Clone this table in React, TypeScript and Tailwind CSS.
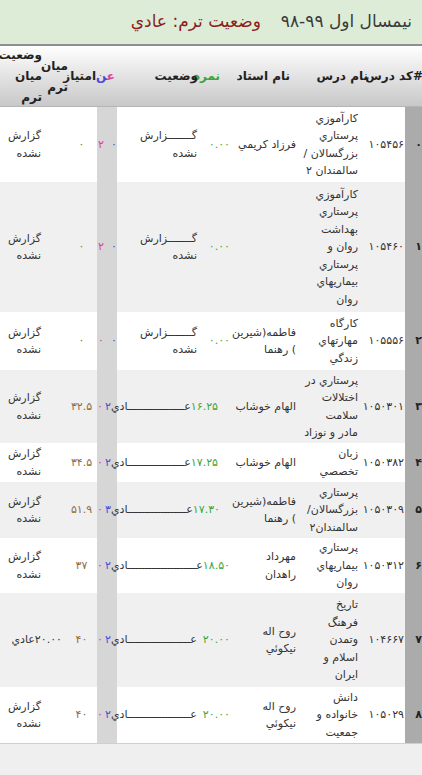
import clsx from 'clsx'

type Row = {
  n: string
  code: string
  name: string[]
  prof: string[]
  grade: string
  done: boolean
  gradePad?: string
  gap?: boolean
  ein: [string, string]
  score: string
  mid?: string
  h: string
  odd: boolean
}

const rows: Row[] = [
  { n: '۰', code: '۱۰۵۴۵۶', name: ['کارآموزي', 'پرستاري', 'بزرگسالان /', 'سالمندان ۲'], prof: ['فرزاد کریمي'], grade: '۰.۰۰', done: false, ein: ['۲', '۰'], score: '۰', h: 'h-[75px]', odd: false },
  { n: '۱', code: '۱۰۵۴۶۰', name: ['کارآموزي', 'پرستاري', 'بهداشت', 'روان و', 'پرستاري', 'بیماریهاي', 'روان'], prof: [], grade: '۰.۰۰', done: false, ein: ['۲', '۰'], score: '۰', h: 'h-[130px]', odd: true },
  { n: '۲', code: '۱۰۵۵۵۶', name: ['کارگاه', 'مهارتهاي', 'زندگي'], prof: ['فاطمه(شیرین', ') رهنما'], grade: '۰.۰۰', done: false, ein: ['۰', '۰'], score: '۰', h: 'h-[58px]', odd: false },
  { n: '۳', code: '۱۰۵۰۳۰۱', name: ['پرستاري در', 'اختلالات', 'سلامت', 'مادر و نوزاد'], prof: ['الهام خوشاب'], grade: '۱۶.۲۵', done: true, gradePad: 'pr-[14px]', ein: ['۰', '۲'], score: '۳۲.۵', h: 'h-[73px]', odd: true },
  { n: '۴', code: '۱۰۵۰۳۸۲', name: ['زبان', 'تخصصي'], prof: ['الهام خوشاب'], grade: '۱۷.۲۵', done: true, gradePad: 'pr-[14px]', ein: ['۰', '۲'], score: '۳۴.۵', h: 'h-[39px]', odd: false },
  { n: '۵', code: '۱۰۵۰۳۰۹', name: ['پرستاري', 'بزرگسالان/', 'سالمندان۲'], prof: ['فاطمه(شیرین', ') رهنما'], grade: '۱۷.۳۰', done: true, gradePad: 'pr-[12px]', ein: ['۰', '۳'], score: '۵۱.۹', h: 'h-[56px]', odd: true },
  { n: '۶', code: '۱۰۵۰۳۱۲', name: ['پرستاري', 'بیماریهاي', 'روان'], prof: ['مهرداد', 'راهدان'], grade: '۱۸.۵۰', done: true, gradePad: 'pr-[2px]', ein: ['۰', '۲'], score: '۳۷', h: 'h-[55px]', odd: false },
  { n: '۷', code: '۱۰۴۶۶۷', name: ['تاریخ', 'فرهنگ', 'وتمدن', 'اسلام و', 'ایران'], prof: ['روح اله', 'نیکوئي'], grade: '۲۰.۰۰', done: true, gradePad: 'pr-[2px]', gap: true, ein: ['۰', '۲'], score: '۴۰', mid: '۲۰.۰۰عادي', h: 'h-[94px]', odd: true },
  { n: '۸', code: '۱۰۵۰۲۹', name: ['دانش', 'خانواده و', 'جمعیت'], prof: ['روح اله', 'نیکوئي'], grade: '۲۰.۰۰', done: true, gradePad: 'pr-[2px]', gap: true, ein: ['۰', '۲'], score: '۴۰', h: 'h-[56px]', odd: false },
]

// kashida-stretched word: start + tatweel filler + end
const Stretch = ({ a, b, className }: { a: string; b: string; className?: string }) => (
  <div className={clsx('flex min-w-0 items-baseline whitespace-nowrap', className)}>
    <span className="shrink-0">{a}</span>
    <span className="min-w-0 flex-1 overflow-hidden">{'ـ'.repeat(40)}</span>
    <span className="shrink-0">{b}</span>
  </div>
)

const Lines = ({ items, className }: { items: string[]; className?: string }) => (
  <div className={className}>
    {items.map((t, i) => (
      <div key={i} className="whitespace-nowrap">
        {t}
      </div>
    ))}
  </div>
)

export default function App() {
  return (
    <div
      dir="rtl"
      className="h-[775px] w-[422px] overflow-hidden bg-[#efefef] font-['DejaVu_Sans',sans-serif] text-[#333]"
    >
      <div className="flex h-[46px] items-center gap-[20px] border-b-2 border-[#8f8f8f] bg-[#dcecd6] pr-[10px] text-[17px]">
        <span className="text-[#3a3a3a]">نیمسال اول ۹۹-۹۸</span>
        <span className="text-[#8b1d1d]">وضعیت ترم: عادي</span>
      </div>

      <div className="-mr-[10px]">
        {/* header */}
        <div className="flex h-[61px] items-center border-b border-[#b5b5b5] bg-gradient-to-b from-white to-[#c8c8c8] text-[12px] leading-[21px] font-bold text-[#222] *:shrink-0">
          <div className="w-[19px] text-left">#</div>
          <div className="w-[43px] whitespace-nowrap">کد درس</div>
          <div className="w-[65px] whitespace-nowrap pr-[2px]">نام درس</div>
          <div className="w-[65px] whitespace-nowrap pr-[15px]">نام استاد</div>
          <div className="w-[40px] pr-[20px] text-[#3aa63a]">نمره</div>
          <div className="w-[80px] pr-[2px]">وضعیت</div>
          <div className="w-[24px] whitespace-nowrap pr-[5px]">
            <span className="text-[#e0409c]">ع</span>
            <span className="text-[#4b4bd8]">ن</span>
          </div>
          <div className="w-[28px] whitespace-nowrap">امتیاز</div>
          <Lines items={['میان', 'ترم']} className="w-[22px] pt-[1px]" />
          <Lines items={['وضعیت', 'میان', 'ترم']} className="w-[46px] pr-[4px]" />
        </div>

        {rows.map((r) => (
          <div
            key={r.n}
            className={clsx('flex text-[11px] leading-[17.5px] *:shrink-0', r.h, r.odd ? 'bg-[#f0f0f0]' : 'bg-white')}
          >
            <div className="flex w-[27px] items-center justify-center bg-[#ababab] font-bold text-[#222]">{r.n}</div>
            <div className="flex w-[45px] items-center pr-[1px]">{r.code}</div>
            <div className="flex w-[62px] items-center pr-[2px]">
              <Lines items={r.name} />
            </div>
            <div className="flex w-[66px] items-center pr-[2px]">
              <Lines items={r.prof} />
            </div>
            {r.done ? (
              <div className={clsx('relative z-10 flex w-[115px] items-center', r.gradePad)}>
                <div className="-ml-[6px] flex min-w-0 flex-1 items-baseline whitespace-nowrap">
                  <span className="shrink-0 text-[#3aa63a]">{r.grade}</span>
                  {r.gap && <span className="w-[6px] shrink-0" />}
                  <Stretch a="عـ" b="ـادي" className="flex-1" />
                </div>
              </div>
            ) : (
              <>
                <div className="flex w-[32px] items-center pr-[2px] text-[#3aa63a]">{r.grade}</div>
                <div className="flex w-[83px] items-center pr-[3px]">
                  <div className="w-[57px]">
                    <Stretch a="گـ" b="ـزارش" />
                    <div>نشده</div>
                  </div>
                </div>
              </>
            )}
            <div className="flex w-[20px] items-center bg-[#d6d6d6]">
              <div dir="ltr" className="flex w-full">
                <span className={clsx('text-[#e0409c]', r.done ? 'ml-0' : 'ml-[1px]')}>{r.ein[0]}</span>
                <span className={clsx('text-[#4b4bd8]', r.done ? 'ml-[2px]' : 'ml-[7px]')}>{r.ein[1]}</span>
              </div>
            </div>
            <div className="flex w-[53px] items-center justify-center pl-[22px] text-[#8d6e3f]">{r.score}</div>
            <div className="flex w-[44px] items-center pr-[3px]">
              {r.mid ? (
                <div className="-mr-[21px] whitespace-nowrap">{r.mid}</div>
              ) : (
                <Lines items={['گزارش', 'نشده']} />
              )}
            </div>
          </div>
        ))}
      </div>
      <div className="border-t border-[#cfcfcf]" />
    </div>
  )
}
